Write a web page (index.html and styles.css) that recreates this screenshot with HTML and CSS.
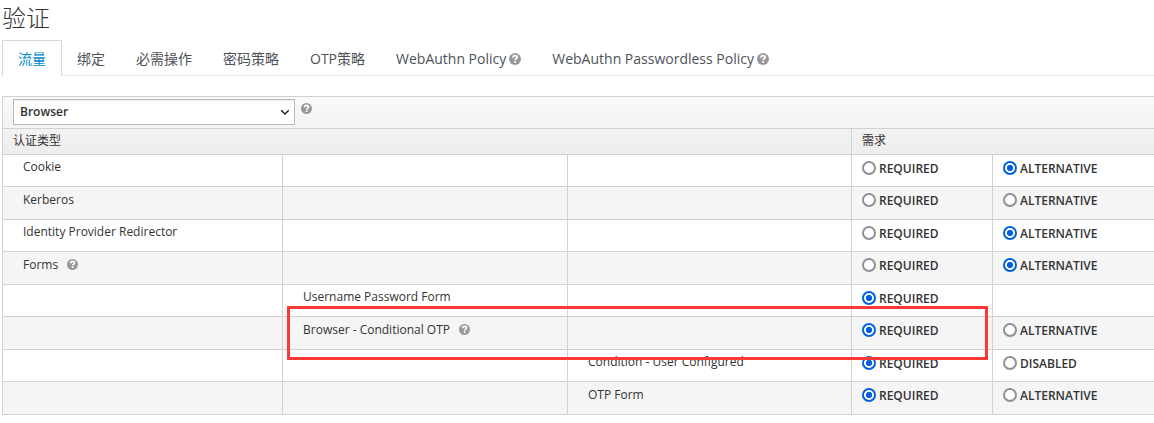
FILE: index.html
```html
<!DOCTYPE html>
<html lang="zh-CN">
<head>
<meta charset="utf-8">
<title>验证</title>
<link rel="stylesheet" href="styles.css">
</head>
<body>
<svg class="defs" width="0" height="0">
  <symbol id="help" viewBox="0 0 12 12">
    <circle cx="6" cy="6" r="6" fill="#999"/>
    <path d="M3.900 4.700C4 3.200 5 2.600 6.100 2.600c1.300 0 2.100.8 2.100 1.700C8.200 5.700 6.200 5.600 6.200 7.100" fill="none" stroke="#fff" stroke-width="1.800"/>
    <rect x="5.200" y="8" width="1.900" height="1.700" fill="#fff"/>
  </symbol>
</svg>
<main class="page">
  <h1 class="title">验证</h1>
  <nav class="tabs">
    <a class="tab active">流量</a>
    <a class="tab">绑定</a>
    <a class="tab">必需操作</a>
    <a class="tab">密码策略</a>
    <a class="tab">OTP策略</a>
    <a class="tab">WebAuthn Policy<svg class="help tab-help"><use href="#help"/></svg></a>
    <a class="tab">WebAuthn Passwordless Policy<svg class="help tab-help"><use href="#help"/></svg></a>
  </nav>
  <section class="table">
    <div class="thead">
      <div class="toolbar">
        <div class="select"><span>Browser</span><svg class="chevron" viewBox="0 0 10 7"><path d="M1.200 1.200 5 5 8.800 1.200" fill="none" stroke="#222" stroke-width="1.500"/></svg></div>
        <svg class="help"><use href="#help"/></svg>
      </div>
      <div class="heads"><div class="head">认证类型</div><div class="head">需求</div></div>
    </div>
    <div class="row"><div class="cell">Cookie</div><div class="cell"></div><div class="cell"></div><label class="opt"><i class="radio"></i>REQUIRED</label><label class="opt"><i class="radio on"></i>ALTERNATIVE</label></div>
    <div class="row alt"><div class="cell">Kerberos</div><div class="cell"></div><div class="cell"></div><label class="opt"><i class="radio"></i>REQUIRED</label><label class="opt"><i class="radio"></i>ALTERNATIVE</label></div>
    <div class="row"><div class="cell">Identity Provider Redirector</div><div class="cell"></div><div class="cell"></div><label class="opt"><i class="radio"></i>REQUIRED</label><label class="opt"><i class="radio on"></i>ALTERNATIVE</label></div>
    <div class="row alt"><div class="cell">Forms<svg class="help"><use href="#help"/></svg></div><div class="cell"></div><div class="cell"></div><label class="opt"><i class="radio"></i>REQUIRED</label><label class="opt"><i class="radio on"></i>ALTERNATIVE</label></div>
    <div class="row"><div class="cell"></div><div class="cell">Username Password Form</div><div class="cell"></div><label class="opt"><i class="radio on"></i>REQUIRED</label><div class="opt"></div></div>
    <div class="row alt"><div class="cell"></div><div class="cell">Browser - Conditional OTP<svg class="help"><use href="#help"/></svg></div><div class="cell"></div><label class="opt"><i class="radio on"></i>REQUIRED</label><label class="opt"><i class="radio"></i>ALTERNATIVE</label><div class="highlight"></div></div>
    <div class="row"><div class="cell"></div><div class="cell"></div><div class="cell">Condition - User Configured</div><label class="opt"><i class="radio on"></i>REQUIRED</label><label class="opt"><i class="radio"></i>DISABLED</label></div>
    <div class="row alt"><div class="cell"></div><div class="cell"></div><div class="cell">OTP Form</div><label class="opt"><i class="radio on"></i>REQUIRED</label><label class="opt"><i class="radio"></i>ALTERNATIVE</label></div>
  </section>
</main>
</body>
</html>
```

FILE: styles.css
```css
* { box-sizing: border-box; }
body {
  margin: 0;
  background: #fff;
  color: #333;
  font: 12px/20px "Open Sans", "Noto Sans CJK SC", sans-serif;
  overflow: hidden;
}
.defs { display: block; }
.page { height: 423px; padding-left: 2px; }
.title {
  margin: 0;
  height: 40px;
  font-size: 24px;
  line-height: 36px;
  font-weight: 300;
}
.tabs {
  display: flex;
  height: 36px;
  border-bottom: 1px solid #ececec;
}
.tab {
  display: flex;
  align-items: center;
  height: 36px;
  padding: 2px 15px 0 16px;
  font-size: 14px;
  color: #4d5258;
  white-space: nowrap;
}
.tab.active {
  width: 60px;
  margin-right: -1px;
  padding: 0 15px;
  background: #fff;
  border: 1px solid #d8d8d8;
  border-bottom: 0;
  color: #0088ce;
}
.help { flex: none; width: 11px; height: 11px; }
.tab-help { width: 12px; height: 12px; margin-left: 3px; }
.table {
  margin-top: 20px;
  border-left: 1px solid #d1d1d1;
  border-bottom: 1px solid #d1d1d1;
}
.thead { background: linear-gradient(#fafafa, #ededed); }
.toolbar {
  display: flex;
  height: 32px;
  padding: 2px 10px;
  border-top: 1px solid #d1d1d1;
}
.toolbar .help { margin: 4px 0 0 6px; }
.select {
  display: flex;
  align-items: center;
  justify-content: space-between;
  width: 282px;
  height: 26px;
  padding: 0 4px 0 6px;
  background: #fff;
  border: 1px solid #b4b9bd;
  box-shadow: inset 0 1px 1px rgba(0, 0, 0, .075);
  font-weight: 600;
}
.chevron { width: 10px; height: 7px; }
.heads {
  display: grid;
  grid-template-columns: 848px 1fr;
  height: 26px;
  border-top: 1px solid #d1d1d1;
}
.head { padding: 2px 10px; font-weight: 400; }
.head + .head { border-left: 1px solid #d1d1d1; }
.row {
  position: relative;
  display: grid;
  grid-template-columns: 279px 285px 284px 141px 1fr;
  height: 32px;
  border-top: 1px solid #d1d1d1;
}
.row.alt { height: 33px; background: #f5f5f5; }
.cell {
  display: flex;
  align-items: flex-start;
  padding: 2px 0 0 20px;
  white-space: nowrap;
}
.alt .cell { padding-top: 3px; }
.cell + .cell, .opt { border-left: 1px solid #d1d1d1; }
.cell .help { margin: 4px 0 0 9px; }
.opt {
  display: flex;
  align-items: flex-start;
  padding: 4px 0 0 10px;
  font-weight: 600;
}
.radio {
  width: 14px;
  height: 14px;
  margin: 2px 3px 0 0;
  border: 2px solid #8f8f9d;
  border-radius: 50%;
  background: #fff;
}
.radio.on {
  border-color: #0060df;
  background: radial-gradient(circle, #0060df 2.800px, #fff 3.400px);
}
.highlight {
  position: absolute;
  z-index: 1;
  left: 284px;
  top: -11px;
  width: 701px;
  height: 54px;
  border: 3px solid #fc3838;
}
```
